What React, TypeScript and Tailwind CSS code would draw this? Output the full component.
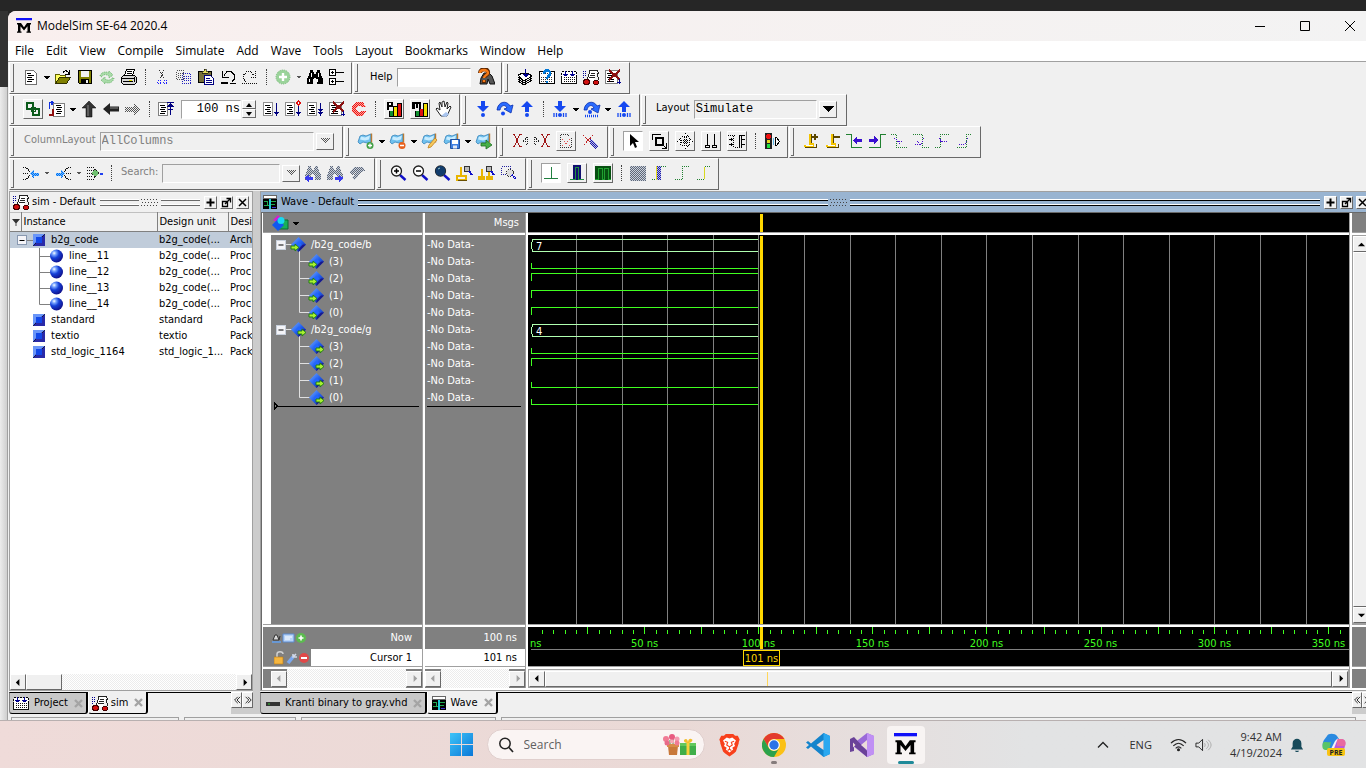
import React from "react";
import type { ReactNode } from "react";

const raised = "border border-t-white border-l-white border-r-[#696969] border-b-[#696969] bg-[#f0f0f0]";
const sunken = "border border-t-[#a0a0a0] border-l-[#a0a0a0] border-r-white border-b-white";
const tahoma = "font-['DejaVu_Sans_Condensed','Noto_Sans',sans-serif]";
const segoe = "font-['Open_Sans','Noto_Sans',sans-serif]";
const mono = "font-['Liberation_Mono',monospace]";

function Ic({ children, smooth, size = "size-[18px]" }: { children: ReactNode; smooth?: boolean; size?: string }) {
  return (
    <svg viewBox="0 0 18 18" className={`${size} block shrink-0`} fill="none" stroke="none" shapeRendering={smooth ? "auto" : "crispEdges"} aria-hidden="true">
      {children}
    </svg>
  );
}

/* ---------- toolbar glyphs, 18 x 18 ---------- */

const Lines = ({ x = 5 }: { x?: number }) => (
  <path d={`M${x} 5.5h5M${x + 1} 7.5h5M${x} 9.5h5M${x + 1} 11.5h5M${x} 13.5h5`} stroke="#000" />
);
const RunPage = () => (
  <>
    <path d="M1.500 2.500h9v13h-9z" fill="#fff" stroke="#909090" />
    <path d="M3 5.500h5M5 7.500h4M3 9.500h5M5 11.500h4M3 13.500h6" stroke="#000" />
  </>
);
const DownArrow = ({ x }: { x: number }) => (
  <>
    <path d={`M${x + 0.5} 3v11`} stroke="#000080" />
    <path d={`M${x - 2} 12h5v1h-1v1h-1v2h-1v-2h-1v-1h-1z`} fill="#000080" />
  </>
);
const Lens = () => (
  <>
    <path d="M11 11l5.500 5" stroke="#1010c8" strokeWidth="2.400" />
    <circle cx="7.500" cy="7" r="5" fill="#fff" stroke="#202020" strokeWidth="1.300" />
  </>
);
const Bookmark = ({ children }: { children?: ReactNode }) => (
  <Ic smooth>
    <path d="M1 10l2-6 3-1 3 1 5-2v8l-4 1-4-1-3 2z" fill="#6fc0ee" stroke="#3a86bd" strokeWidth=".8" />
    <path d="M4 4.500l4 1 5-2-1 4-4 1-5-1z" fill="#c8ecff" />
    <path d="M14.500 1.500v9" stroke="#b77a35" strokeWidth="1.400" />
    {children}
  </Ic>
);
const Carry = () => (
  <path d="M1 10C2 1 11 0 14 6l3-1-2 8-7-4 3-1c-2-4-6-3-7 2z" fill="#2a6cff" stroke="#0a2fb0" strokeWidth=".8" />
);
const Binoc = ({ color = "#000" }: { color?: string }) => (
  <path d="M4 2h3v2h1v2h2v-2h1v-2h3v3h1v3h1v2h1v6h-6v-5h-1v-1h-2v1h-1v5h-6v-6h1v-2h1v-3h1z" fill={color} />
);

const checks = [
  ["ckGray", "#555", "transparent"],
  ["ckBlue", "#2020a0", "#b8b8f0"],
  ["ckGreen", "#60b860", "#cdeccd"],
  ["ckRed", "#f01010", "#f8a8a0"],
  ["ckSky", "#0070f0", "#70b8ff"],
  ["ckSteel", "#606878", "#c8d0dc"],
];
const CheckerDefs = () => (
  <svg className="absolute size-0" aria-hidden="true">
    <defs>
      {checks.map(([id, ink, base]) => (
        <pattern key={id} id={id} width="2" height="2" patternUnits="userSpaceOnUse"><path d="M0 0h2v2H0z" fill={base} /><path d="M0 0h1v1H0zM1 1h1v1H1z" fill={ink} /></pattern>
      ))}
      <linearGradient id="dia" x1="0" y1="0" x2="1" y2="1"><stop offset="0" stopColor="#7eb0ff" /><stop offset=".5" stopColor="#2060f0" /><stop offset="1" stopColor="#1a1a8c" /></linearGradient>
      <radialGradient id="ball" cx=".32" cy=".28" r=".75"><stop offset="0" stopColor="#fff" /><stop offset=".2" stopColor="#7aa6ff" /><stop offset=".5" stopColor="#1540d8" /><stop offset="1" stopColor="#10108a" /></radialGradient>
    </defs>
  </svg>
);

const icons: Record<string, ReactNode> = {
  new: <Ic><path d="M3.500 2.500h8l3 3v11h-11z" fill="#fff" stroke="#707070" /><path d="M5 5.500h4M6 7.500h6M5 9.500h5M6 11.500h6M5 13.500h5" stroke="#000" /></Ic>,
  open: <Ic><path d="M1.500 15V6.500h4l1 1h5V10" fill="#ffff60" stroke="#606000" /><path d="M1.500 15.500l4-6h11l-4 6z" fill="#808000" stroke="#303000" /><path d="M9 4.500c2-3 4-2 6 1M15 2v4h-4" stroke="#000" /></Ic>,
  save: <Ic><path d="M2.500 2.500h13v13h-12l-1-1z" fill="#808000" stroke="#000" /><path d="M5 3h8v6H5z" fill="#f0f0f0" /><path d="M5 11h8v4H5z" fill="#000" /><path d="M10 12h2v3h-2z" fill="#f0f0f0" /></Ic>,
  refresh: <Ic smooth><path d="M2 8c1-4 6-5 9-3V3l4 4-4 3V8C8 6 5 6 4 9z" fill="#a9dba9" stroke="#55a955" strokeWidth=".8" strokeDasharray="1 1" /><path d="M16 10c-1 5-6 6-9 4v2l-4-4 4-3v2c3 2 6 1 7-1z" fill="#a9dba9" stroke="#55a955" strokeWidth=".8" strokeDasharray="1 1" /></Ic>,
  print: <Ic><path d="M4.500 7.500l2-6h8l-2 6" fill="#fff" stroke="#000" /><path d="M7 3.500h5M6.500 5.500h5" stroke="#000" /><path d="M1.500 9.500l2-2h11l2 2v5l-2 2h-11l-2-2z" fill="#d8d8d8" stroke="#000" /><path d="M2 10.500h12M3 13.500h10M14.500 9v5" stroke="#000" /><path d="M9 12h3v1H9z" fill="#e0e000" /></Ic>,
  cut: <Ic><path d="M6 2l5 9M11 2L7 11" stroke="#333" strokeDasharray="1 1" /><path d="M4.500 12.500h3v3h-3zM10.500 12.500h3v3h-3z" stroke="#2020ff" strokeDasharray="1 1" /></Ic>,
  copy: <Ic><path d="M1.500 2.500h7v9h-7zM3 5h5M3 7h5M3 9h5" stroke="#505050" strokeDasharray="1 1" /><path d="M7.500 5.500h8v10h-8zM9 8h5M9 10h6M9 12h6" stroke="#2020c0" strokeDasharray="1 1" /></Ic>,
  paste: <Ic><path d="M1.500 3.500h13v11h-13z" fill="#77703a" stroke="#000" /><path d="M5 5h6V3H9V1H7v2H5z" fill="#e8e060" stroke="#000" strokeWidth=".6" /><path d="M7.500 7.500h6l3 3v6h-9z" fill="#fff" stroke="#000080" /><path d="M9 10.500h4M9 12.500h6M9 14.500h6" stroke="#000080" /></Ic>,
  undo: <Ic><path d="M3.500 3v6h6M4.500 8.500L8 3.500h4l3.500 3.500v4L13 13.500" stroke="#000" /><path d="M2 15h7M11 15.500h6" stroke="#000" strokeWidth="1.500" /></Ic>,
  redo: <Ic><path d="M14.500 3v6h-6M13.500 8.500L10 3.500H6L2.500 7v4L5 13.500" stroke="#111" strokeDasharray="1 1" /><path d="M1 15.500h16" stroke="#111" strokeDasharray="1 1" /></Ic>,
  addGreen: <Ic smooth><circle cx="9" cy="9" r="7" fill="#9ad39a" stroke="#78b878" strokeDasharray="1 1" /><path d="M9 5v8M5 9h8" stroke="#fff" strokeWidth="2.400" /></Ic>,
  find: <Ic><Binoc /><path d="M5.500 5v4M12.500 5v4M3.500 11v3M11.500 11v3" stroke="#fff" /></Ic>,
  expand: <Ic><path d="M1.500 1.500h6v6h-6zM1.500 10.500h6v6h-6z" fill="#fff" stroke="#000" /><path d="M4.500 3v3M3 4.500h3M3 13.500h3M4.500 12v3M8 4.500h8M8 13.500h8" stroke="#000" /></Ic>,
  helpFind: <Ic smooth><path d="M7 5h5l3 3 3 8h-5l-2-5-1 5H3l1-6z" fill="#555" stroke="#111" /><path d="M3 5c0-5 9-5 8 0 0 2-4 2-4 5M7 12v3" stroke="#5a2500" strokeWidth="4" /><path d="M3 5c0-4 8-4 8 0 0 2-4 2-4 5M7 12v2" stroke="#f57a18" strokeWidth="2.400" /></Ic>,
  layers: <Ic><path d="M2 7l5-2h5l4 3-8 5z" fill="#fff" stroke="#000" /><path d="M2 9l6 4 8-5M2 11l6 4 8-5M2 13l6 4 8-5" stroke="#000" /><path d="M9.500 1v8M6.500 6.500h6M7.500 7.500h4M8.500 8.500h2" stroke="#000090" /></Ic>,
  compileHelp: <Ic><path d="M1.500 3.500h15v12h-15z" fill="#fff" stroke="#000" /><path d="M3 9.500h12M3 11.500h12M3 13.500h12M3 5.500h12" stroke="#333" strokeDasharray="1 1" /><path d="M6 6c0-5 7-5 6 0 0 2-3 2-3 5M9 13v2" stroke="#0078d8" strokeWidth="2.500" /></Ic>,
  compileAll: <Ic><path d="M1.500 3.500h15v12h-15z" fill="#fff" stroke="#000" strokeDasharray="2 1" /><path d="M1.500 8.500v7h15v-7M3 9.500h12M3 11.500h12M3 13.500h12" stroke="#111" /><path d="M3 9.500h12M3 11.500h12M3 13.500h12" stroke="#fff" strokeDasharray="1 1" /><path d="M5.500 3v5M12.500 3v5M3 6.500h5M4 7.500h3M10 6.500h5M11 7.500h3" stroke="#000090" /></Ic>,
  simulate: <Ic><path d="M7 3h8l-3 10-6-1z" fill="#fff" /><path d="M7 2.500h8l2 3M8 3l-3 9M15 5l2 7M9 5.500h4M8 7.500h5M7 9.500h6" stroke="#222" /><path d="M1 3.500h4M1 5.500h3M1 7.500h3M1 9.500h2" stroke="#000090" strokeDasharray="1 1" /><circle cx="4.500" cy="14" r="2.800" fill="#d01010" stroke="#400" /><circle cx="14" cy="14.500" r="2.500" fill="#d01010" stroke="#400" /></Ic>,
  stop: <Ic><path d="M1.500 2.500h12v13h-12z" fill="#fff" stroke="#808080" /><path d="M3 5.500h4M4 7.500h5M3 9.500h5M4 11.500h6M3 13.500h7" stroke="#000" /><path d="M5 2l11 10M16 2L5 12" stroke="#8b1010" strokeWidth="2.200" /><path d="M15.500 11v5M13 14.500h4" stroke="#000090" /></Ic>,
  restart: <Ic><path d="M3 3h6v6H3z" stroke="#0a5a1a" strokeWidth="2" /><path d="M9 9h6v6H9z" stroke="#0a5a1a" strokeWidth="2" /><path d="M7 7h4v4H7z" stroke="#0a5a1a" strokeWidth="1" /></Ic>,
  goto: <Ic><path d="M5.500 3.500h11v13h-11z" fill="#fff" stroke="#808080" /><Lines x={8} /><path d="M1.500 9V2.500H6M4 1v4" stroke="#1030e0" strokeWidth="1.400" /><path d="M4.500 9v6h-4" stroke="#901010" strokeWidth="2" /></Ic>,
  up: <Ic smooth><path d="M9 1l7 7h-4v9H6V8H2z" fill="#333" stroke="#000" strokeWidth=".5" /><path d="M8 5v11" stroke="#888" /></Ic>,
  left: <Ic smooth><path d="M1 9l7-6v3.500h9v5H8V15z" fill="#222" /><path d="M8 8h8" stroke="#888" /></Ic>,
  right: <Ic><path d="M17 9l-7-6v3.500H1v5h9V15z" fill="url(#ckGray)" /></Ic>,
  runTop: <Ic><path d="M1.500 2.500h9v13h-9z" fill="#fff" stroke="#808080" /><path d="M3 5.500h5M4 7.500h5M3 9.500h5M4 11.500h5M3 13.500h5" stroke="#000" /><path d="M10 2.500h7M13.500 3v12M10 6.500h7M11 5.500h5M12 4.500h3M11 9.500h5" stroke="#000080" /></Ic>,
  run: <Ic><RunPage /><DownArrow x={14} /></Ic>,
  runCont: <Ic><RunPage /><DownArrow x={14} /><path d="M14.500 1l2 2-2 2-2-2z" fill="#fff" stroke="#e01010" /></Ic>,
  runAll: <Ic><RunPage /><DownArrow x={14} /><path d="M12 9h5v1h-1v1h-3v-1h-1z" fill="#000080" /></Ic>,
  cBreak: <Ic><path d="M16 7l-3-5H6L2 6v6l4 4h7l3-5h-5l-1 1H8l-2-2V8l2-2h2l1 1z" fill="url(#ckRed)" /></Ic>,
  profP: <Ic><path d="M2 1.500h6v5H4V10H2z" fill="#000" /><path d="M4 3h2v2H4z" fill="#fff" /><path d="M5 11h3v5H5z" fill="#109030" /><path d="M9 7h3v9H9z" fill="#f0e000" /><path d="M13 4h3v12h-3z" fill="#e01010" /><path d="M4.500 10.500v6h12v-13h-4V16M8.500 16V6.500h4" stroke="#000" /></Ic>,
  profM: <Ic><path d="M1 1.500h9V9H8V4H7v4H5V4H4v5H1z" fill="#000" /><path d="M5 11h3v5H5z" fill="#109030" /><path d="M9 9h3v7H9z" fill="#e01010" /><path d="M13 4h3v12h-3z" fill="#f0e000" /><path d="M4.500 10.500v6h12v-13h-4V16M8.500 16V9" stroke="#000" /></Ic>,
  hand: <Ic smooth><path d="M6 16l-5-7 1-1 3 2-1-7 1-1 2 5V2l2-1 1 6 2-5 1 1-1 6 3-3 1 1-4 9z" fill="#fff" stroke="#222" /><path d="M6 16l5-4 3 2-3 3z" fill="#a9c5ef" /></Ic>,
  stepIn: <Ic smooth><path d="M7 1h4v5h4l-6 6-6-6h4z" fill="#1548f0" /><circle cx="9" cy="15" r="2" fill="#1548f0" /></Ic>,
  stepOver: <Ic smooth><Carry /><circle cx="7" cy="13.500" r="2" fill="#1548f0" /></Ic>,
  stepOut: <Ic smooth><path d="M7 12h4V7h4L9 1 3 7h4z" fill="#1548f0" /><circle cx="9" cy="15" r="2" fill="#1548f0" /></Ic>,
  stepInCur: <Ic smooth><path d="M7 1h4v5h4l-6 6-6-6h4z" fill="#1548f0" /><path d="M3 13v4M5.500 13v4M12.500 13v4M15 13v4" stroke="#1548f0" strokeWidth="1.300" /><circle cx="9" cy="15" r="2" fill="#1548f0" /></Ic>,
  stepOverCur: <Ic smooth><Carry /><circle cx="7" cy="12" r="2" fill="#1548f0" /><path d="M2 16h14" stroke="#1548f0" strokeWidth="2.500" strokeDasharray="1 1" /></Ic>,
  stepOutCur: <Ic smooth><path d="M7 12h4V7h4L9 1 3 7h4z" fill="#1548f0" /><path d="M3 13v4M5.500 13v4M12.500 13v4M15 13v4" stroke="#1548f0" strokeWidth="1.300" /><circle cx="9" cy="15" r="2" fill="#1548f0" /></Ic>,
  bmAdd: <Bookmark><circle cx="13" cy="13.500" r="3.500" fill="#43a047" /><path d="M11 13.500h4M13 11.500v4" stroke="#fff" strokeWidth="1.300" /></Bookmark>,
  bmDel: <Bookmark><circle cx="13" cy="13.500" r="3.500" fill="#e8601c" /><path d="M11 13.500h4" stroke="#fff" strokeWidth="1.500" /></Bookmark>,
  bmEdit: <Bookmark><path d="M7 16l1-3 6-7 2 2-6 7z" fill="#f6c85a" stroke="#c08020" strokeWidth=".8" /></Bookmark>,
  bmSave: <Bookmark><path d="M7.500 7.500h9v9h-9z" fill="#3f7fe0" stroke="#2050a0" /><path d="M9 8h6v4H9z" fill="#fff" /><path d="M10 13.500h4v3h-4z" fill="#dfe8f8" /></Bookmark>,
  bmGo: <Bookmark><path d="M6 11h5V8l6 5-6 4v-3H6z" fill="#48b048" stroke="#207020" strokeWidth=".8" /></Bookmark>,
  xPrev: <Ic><path d="M1.500 2.500h2l5 12h2M10.500 2.500h-2l-5 12h-2" stroke="#a01818" /><path d="M16.500 5v8M14.500 7v4M12.500 9v1M16 5l-4 4 4 4" stroke="#222" strokeDasharray="1 1" /></Ic>,
  xNext: <Ic><path d="M7.500 2.500h2l5 12h2M16.500 2.500h-2l-5 12h-2" stroke="#a01818" /><path d="M1.500 5v8M3.500 7v4M2 5l4 4-4 4" stroke="#222" strokeDasharray="1 1" /></Ic>,
  dotPage: <Ic><path d="M3.500 2.500h7l4 4v9h-11z" stroke="#333" strokeDasharray="1 1" /><path d="M5 7l8 7M13 7l-8 7" stroke="#e05050" strokeDasharray="1 2" /></Ic>,
  xEdit: <Ic><path d="M2 3l10 10M12 3L3 13" stroke="#c02020" strokeDasharray="2 1" /><path d="M9 7l4 2 4 5-3 3-5-5z" fill="url(#ckBlue)" /></Ic>,
  pointer: <Ic smooth><path d="M6 2v12l3-3 2 5 2-1-2-5h4z" fill="#000" /></Ic>,
  zoomMode: <Ic><path d="M2.500 8V2.500H11" stroke="#000" /><path d="M6 6h7v7H6z" stroke="#000" strokeWidth="2" /><path d="M12 12l4 4M16.500 11v5.500h-5" stroke="#000" /></Ic>,
  pan: <Ic><path d="M9.500 1.500l3 3h-6zM9.500 16.500l3-3h-6zM1.500 9.500l3-3v6zM16.500 9.500l-3-3v6z" fill="#fff" stroke="#000" strokeDasharray="1 1" /><path d="M8.500 5v9M10.500 5v9M5 8.500h9M5 10.500h9" stroke="#000" strokeDasharray="1 1" /></Ic>,
  twoCur: <Ic><path d="M5.500 2v11M12.500 2v11M3.500 13.500h4v2h-4zM10.500 13.500h4v2h-4z" stroke="#000" /></Ic>,
  editWave: <Ic><path d="M0 3.500h7M5.500 4v12M7 15.500h4" stroke="#000" strokeDasharray="1 1" /><path d="M11.500 3v13M12 3.500h5M13.500 4v12M1 7.500h4M3 6v3M1 12.500h4M3 11v3M14 7.500h3M14 12.500h3" stroke="#000" /></Ic>,
  light: <Ic><path d="M2 1h7v16H2z" fill="#222" /><circle cx="5.500" cy="4.500" r="2.500" fill="#f01010" /><circle cx="5.500" cy="9.500" r="1.700" fill="#e8d820" /><circle cx="5.500" cy="14" r="2" fill="#20e040" /><path d="M12.500 5.500h1l3 4-3 4h-1z" fill="#fff" stroke="#000" /><path d="M10.500 6v7" stroke="#60b8e8" /></Ic>,
  curAdd: <Ic><path d="M7 2h2v9h3v4H2v-2h5z" fill="#f4c400" /><path d="M9.500 2v9M3 15.500h11v-4" stroke="#5a4600" /><path d="M4 13.500h7" stroke="#fff" /><path d="M10 5h6M13 2v6" stroke="#5a4600" strokeWidth="2" /></Ic>,
  curDel: <Ic><path d="M7 2h2v9h3v4H2v-2h5z" fill="#f4c400" /><path d="M9.500 2v9M3 15.500h11v-4" stroke="#5a4600" /><path d="M4 13.500h7" stroke="#fff" /><path d="M10 5h6" stroke="#5a4600" strokeWidth="2" /></Ic>,
  edgePrev: <Ic><path d="M0 2.500h5.500v13H16" stroke="#208030" strokeWidth="1.300" /><path d="M7 8l4-4v3h5v3h-5v3z" fill="#3a10d0" /></Ic>,
  edgeNext: <Ic><path d="M1 15.500h11.500V2.500H18" stroke="#208030" strokeWidth="1.300" /><path d="M10 8L6 4v3H1v3h5v3z" fill="#3a10d0" /></Ic>,
  fallPrev: <Ic><path d="M1 2.500h5.500v13H17" stroke="#208030" strokeDasharray="1 1" /><path d="M4 6l4 2 2 4M7 9h6" stroke="#4a10d0" strokeDasharray="1 1" /></Ic>,
  fallNext: <Ic><path d="M1 2.500h9.500v13H17" stroke="#208030" strokeDasharray="1 1" /><path d="M3 12h6l3-6M5 9l4 4" stroke="#4a10d0" strokeDasharray="1 1" /></Ic>,
  risePrev: <Ic><path d="M1 15.500h5.500v-13H16" stroke="#208030" strokeDasharray="1 1" /><path d="M5 6l5 6M6 9h7" stroke="#4a10d0" strokeDasharray="1 1" /></Ic>,
  riseNext: <Ic><path d="M1 15.500h9.500v-13H16" stroke="#208030" strokeDasharray="1 1" /><path d="M3 12h6l3-6" stroke="#4a10d0" strokeDasharray="1 1" /></Ic>,
  arrL: <Ic><path d="M1 3.500h3l4 4M1 9.500h5M1 15.500h3l4-4" stroke="#111" strokeDasharray="1 1" /><path d="M8 9.500l4-4v3h5v3h-5v3z" fill="url(#ckSky)" /></Ic>,
  arrR: <Ic><path d="M17 3.500h-3l-4 4M17 9.500h-5M17 15.500h-3l-4-4" stroke="#111" strokeDasharray="1 1" /><path d="M11 9.500l-4-4v3H2v3h5v3z" fill="url(#ckSky)" /></Ic>,
  arrG: <Ic><path d="M1 3.500h6l2 3M1 6.500h5M1 9.500h5M1 12.500h5M1 15.500h6l2-3" stroke="#111" strokeDasharray="1 1" /><path d="M9 5l4 4-4 4-4-4z" fill="#70c070" stroke="#222" strokeDasharray="1 1" /><path d="M14 9.500h3" stroke="#2040f0" strokeWidth="2" /></Ic>,
  sPrev: <Ic><Binoc color="url(#ckSteel)" /><path d="M0 14l5-3v2h4v3H5v2z" fill="#3a3af0" /></Ic>,
  sNext: <Ic><Binoc color="url(#ckSteel)" /><path d="M18 14l-5-3v2H9v3h4v2z" fill="#3a3af0" /></Ic>,
  sOpt: <Ic><path d="M2 8l4-5h9l2 4-4 1-6 8-3-2 4-6-4 3z" fill="url(#ckSteel)" /></Ic>,
  zin: <Ic smooth><Lens /><path d="M5 7h5M7.500 4.500v5" stroke="#000" strokeWidth="1.500" /></Ic>,
  zout: <Ic smooth><Lens /><path d="M5 7h5" stroke="#000" strokeWidth="1.500" /></Ic>,
  zfull: <Ic smooth><Lens /><circle cx="7.500" cy="7" r="5" fill="#123c6c" /><path d="M5 5l2-1" stroke="#9cc" /></Ic>,
  zcur: <Ic><path d="M6 3v9M2 12h9v4H2z" stroke="#e8b400" strokeWidth="2" /><path d="M3 16.500h9" stroke="#6a5000" /><circle cx="12" cy="5" r="3" fill="#bbb" stroke="#333" /><path d="M14 7l3 4" stroke="#1010c8" strokeWidth="2" /></Ic>,
  zcur2: <Ic><path d="M5 5v8M2 13h5v2H2zM12 8v5M10 13h5v2h-5z" stroke="#e8b400" strokeWidth="2" /><circle cx="12" cy="5" r="3" fill="#bbb" stroke="#333" /><path d="M14 7l3 4" stroke="#1010c8" strokeWidth="2" /></Ic>,
  zsel: <Ic><path d="M2.500 2.500h9v8h-9z" stroke="#2020a0" strokeDasharray="1 1" /><circle cx="11" cy="9" r="3.500" fill="#ddd" stroke="#333" strokeDasharray="1 1" /><path d="M13 11l4 4" stroke="#1010c8" strokeWidth="2" strokeDasharray="1 1" /></Ic>,
  w1: <Ic><path d="M2 14.500h14M9.500 3v11" stroke="#208040" /></Ic>,
  w2: <Ic><path d="M5 1h8v15H5z" fill="#101070" /><path d="M2 15.500h5.500v-12h3v12H16" stroke="#209040" /></Ic>,
  w3: <Ic><path d="M1 2h16v14H1z" fill="#065010" /><path d="M1 15.500h3v-11h4v11h2v-11h4v11h3" stroke="#20a030" /></Ic>,
  w4: <Ic><path d="M1 2h16v15H1z" fill="url(#ckSteel)" /></Ic>,
  w5: <Ic><path d="M6 2h4v14H6z" fill="url(#ckBlue)" /><path d="M1 15.500h4M10 2.500h5" stroke="#208030" strokeDasharray="1 1" /><path d="M5.500 2v14" stroke="#e8e020" /></Ic>,
  w6: <Ic><path d="M2 15.500h7.500v-13H16" stroke="#208030" strokeDasharray="1 1" /></Ic>,
  w7: <Ic><path d="M2 15.500h7.500M10 2.500h6" stroke="#208030" strokeDasharray="1 1" /><path d="M9.500 3v12" stroke="#d8d820" /></Ic>,
};

function Drop({ faint }: { faint?: boolean }) {
  return (
    <svg viewBox="0 0 10 6" className="h-[6px] w-[10px] shrink-0" shapeRendering="crispEdges" aria-hidden="true">
      <path d={faint ? "M3 2h4v1H6v1H4V3H3z" : "M2 2h6v1H7v1H6v1H4V4H3V3H2z"} fill={faint ? "#555" : "#000"} />
    </svg>
  );
}

/* Tokens: icon name, "|" separator, "v" drop arrow, "v-" faint arrow, "[name" raised button, "(name" pressed button */
function Tools({ items }: { items: string[] }) {
  return (
    <>
      {items.map((t, i) => {
        if (t === "|") return <span key={i} className="mx-[5px] h-4 w-px shrink-0 border-l border-dotted border-[#404040]" />;
        if (t === "v") return <Drop key={i} />;
        if (t === "v-") return <Drop key={i} faint />;
        const boxed = t[0] === "[" || t[0] === "(";
        const name = boxed ? t.slice(1) : t;
        const look = t[0] === "[" ? raised : t[0] === "(" ? sunken + " bg-white" : "";
        return (
          <button key={i} type="button" aria-label={name} className={boxed ? `mx-[3px] flex size-5 shrink-0 items-center justify-center overflow-hidden ${look}` : "flex h-5 w-[22px] shrink-0 items-center justify-center"}>
            {icons[name]}
          </button>
        );
      })}
    </>
  );
}

function Group({ children, w }: { children: ReactNode; w: string }) {
  return (
    <div className={`mr-px flex h-8 shrink-0 items-center overflow-hidden border border-t-white border-l-white border-r-[#696969] border-b-[#696969] ${w}`}>
      <span className="ml-px h-7 w-[3px] shrink-0 border-r border-b border-r-[#696969] border-b-[#696969]" />
      <div className="flex items-center pb-0.5 pl-1.5">{children}</div>
    </div>
  );
}

function Combo({ id, label, value, w, dim }: { id: string; label: string; value: string; w: string; dim?: boolean }) {
  return (
    <div className={`flex items-center ${dim ? "text-[#808080]" : "text-black"}`}>
      <label htmlFor={id} className="mr-1 shrink-0 pb-0.5 pl-1">{label}</label>
      <select id={id} defaultValue={value} className={`h-[19px] appearance-none rounded-none bg-[#f0f0f0] px-px text-[12px] leading-4 ${sunken} ${mono} ${w}`}>
        <option>{value}</option>
      </select>
      <span className={`ml-0.5 flex h-[17px] w-[18px] items-center justify-center ${raised}`}>
        <svg viewBox="0 0 12 7" className="h-[7px] w-3" shapeRendering="crispEdges" aria-hidden="true"><path d="M0 0h12L6 6z" fill={dim ? "url(#ckGray)" : "#000"} /></svg>
      </span>
    </div>
  );
}

function Toolbars() {
  const row = "flex";
  return (
    <div className={`border-t border-[#a0a0a0] pl-px text-[11px] ${tahoma}`}>
      <div className={row}>
        <Group w="w-[343px]"><Tools items={["new", "v", "open", "save", "refresh", "print", "|", "cut", "copy", "paste", "undo", "redo", "|", "addGreen", "v-", "find", "expand"]} /></Group>
        <Group w="w-[149px]">
          <label htmlFor="help" className="pl-1.5">Help</label>
          <input id="help" className={`mx-1 h-[19px] w-[74px] bg-white ${sunken}`} />
          <Tools items={["helpFind"]} />
        </Group>
        <Group w="w-[127px]"><Tools items={["layers", "compileHelp", "compileAll", "simulate", "stop"]} /></Group>
      </div>
      <div className={row}>
        <Group w="w-[451px]">
          <Tools items={["[restart", "goto", "v", "up", "left", "right", "|", "runTop"]} />
          <input aria-label="Run length" defaultValue="100 ns" className={`ml-1 h-[19px] w-[60px] bg-white text-right text-[12px] ${sunken} ${mono}`} />
          <span className="mr-1 ml-px flex w-[14px] flex-col">
            <button type="button" aria-label="Increase" className={`flex h-[9px] items-center justify-center ${raised}`}><svg viewBox="0 0 6 4" className="h-1 w-1.5"><path d="M3 0l3 4H0z" /></svg></button>
            <button type="button" aria-label="Decrease" className={`flex h-[9px] items-center justify-center ${raised}`}><svg viewBox="0 0 6 4" className="h-1 w-1.5"><path d="M3 4l3-4H0z" /></svg></button>
          </span>
          <Tools items={["run", "runCont", "runAll", "stop", "cBreak", "|", "[profP", "[profM", "hand"]} />
        </Group>
        <Group w="w-[179px]"><Tools items={["stepIn", "stepOver", "stepOut", "|", "stepInCur", "v", "stepOverCur", "v", "stepOutCur"]} /></Group>
        <Group w="w-[206px]"><Combo id="layout" label="Layout" value="Simulate" w="w-[123px]" /></Group>
      </div>
      <div className={row}>
        <Group w="w-[334px]"><Combo id="columns" label="ColumnLayout" value="AllColumns" w="w-[214px]" dim /></Group>
        <Group w="w-[153px]"><Tools items={["bmAdd", "v", "bmDel", "v", "bmEdit", "bmSave", "v", "bmGo"]} /></Group>
        <Group w="w-[110px]"><Tools items={["xPrev", "xNext", "[dotPage", "xEdit"]} /></Group>
        <Group w="w-[179px]"><Tools items={["(pointer", "[zoomMode", "[pan", "[twoCur", "[editWave", "|", "light"]} /></Group>
        <Group w="w-[192px]"><Tools items={["curAdd", "curDel", "edgePrev", "edgeNext", "fallPrev", "fallNext", "risePrev", "riseNext"]} /></Group>
      </div>
      <div className={row}>
        <Group w="w-[366px]">
          <Tools items={["arrL", "v-", "arrR", "v-", "arrG", "|"]} />
          <Combo id="search" label="Search:" value="" w="w-[118px]" dim />
          <span className="w-0.5" />
          <Tools items={["sPrev", "sNext", "sOpt"]} />
        </Group>
        <Group w="w-[150px]"><Tools items={["zin", "zout", "zfull", "zcur", "zcur2", "zsel"]} /></Group>
        <Group w="w-[192px]"><Tools items={["(w1", "[w2", "[w3", "|", "w4", "w5", "w6", "w7"]} /></Group>
      </div>
    </div>
  );
}

/* ---------- shared pane parts ---------- */

function Rules({ active }: { active?: boolean }) {
  const line = `h-0.5 border-t border-b border-t-white ${active ? "border-b-black" : "border-b-[#696969]"}`;
  return (
    <span className="flex h-[7px] flex-1 flex-col justify-between">
      <i className={line} />
      <i className={line} />
    </span>
  );
}

function PaneTitle({ icon, title, active }: { icon: ReactNode; title: string; active?: boolean }) {
  const b = `flex size-[13px] shrink-0 items-center justify-center ${raised}`;
  const g = "size-[11px]";
  return (
    <div className={`flex h-5 shrink-0 items-center pl-0.5 ${active ? "bg-[#99b4d1]" : "bg-[#f0f0f0]"}`}>
      {icon}
      <h2 className="mr-1 ml-1 shrink-0">{title}</h2>
      <Rules active={active} />
      <svg viewBox="0 0 18 7" className="mx-0.5 h-[7px] w-[18px] shrink-0" shapeRendering="crispEdges" aria-hidden="true"><path d="M0 .5h18M1 3.500h17M0 6.500h18" stroke="#444" strokeDasharray="1 2" /></svg>
      <Rules active={active} />
      <span className={`flex shrink-0 gap-[3px] pl-1 ${active ? "-mr-[3px]" : "pr-[3px]"}`}>
        <button type="button" aria-label="Zoom pane" className={b}><svg viewBox="0 0 11 11" className={g}><path d="M5.500 1.500v8M1.500 5.500h8" stroke="#000" strokeWidth="2" /></svg></button>
        <button type="button" aria-label="Undock" className={b}><svg viewBox="0 0 11 11" className={g} fill="none"><path d="M1.500 4.500h5v5h-5zM4 7l5-5M5.500 1.500h4v4" stroke="#000" strokeWidth="1.300" /></svg></button>
        <button type="button" aria-label="Close pane" className={b}><svg viewBox="0 0 11 11" className={g}><path d="M2 2l7 7M9 2l-7 7" stroke="#000" strokeWidth="1.500" /></svg></button>
      </span>
    </div>
  );
}

const trough = "bg-[conic-gradient(#fff_25%,#ececec_0_50%,#fff_0_75%,#ececec_0)] bg-[length:2px_2px]";

function Arrow({ dir, dim }: { dir: "l" | "r" | "u" | "d"; dim?: boolean }) {
  const d = { l: "M6 1v8L2 5z", r: "M4 1v8l4-4z", u: "M1 7h8L5 3z", d: "M1 3h8L5 7z" }[dir];
  return (
    <button type="button" aria-label={"Scroll " + dir} className={`flex size-4 shrink-0 items-center justify-center ${raised}`}>
      <svg viewBox="0 0 10 10" className="size-[9px]"><path d={d} fill={dim ? "#a0a0a0" : "#000"} /></svg>
    </button>
  );
}

function Tab({ icon, label, active }: { icon: ReactNode; label: string; active?: boolean }) {
  return (
    <button type="button" className={`flex h-[22px] shrink-0 items-center rounded-b-[3px] border-r-2 border-b border-l border-black px-0.5 ${active ? "border-l-white bg-[#f0f0f0]" : "border-t border-l-[#808080] bg-[#c8c8c8]"}`}>
      {icon}
      <span className="mr-1.5 ml-1">{label}</span>
      <svg viewBox="0 0 9 9" className="mr-px size-[9px]"><path d="M1 1l7 7M8 1L1 8" stroke="#a4a4a4" strokeWidth="2.400" /></svg>
    </button>
  );
}

function TabNav() {
  const b = `flex h-4 w-[11px] items-center justify-center ${raised}`;
  return (
    <div className="flex h-[22px] shrink-0 items-start bg-[#ccc]">
      {["M6 1L2 5l4 4M9 1L5 5l4 4", "M2 1l4 4-4 4M5 1l4 4-4 4"].map((d, i) => (
        <button key={i} type="button" aria-label={i ? "Next tabs" : "Previous tabs"} className={b}><svg viewBox="0 0 10 10" className="size-2" fill="none"><path d={d} stroke="#000" /></svg></button>
      ))}
    </div>
  );
}

const WaveIcon = () => (
  <svg viewBox="0 0 14 14" className="size-[14px] shrink-0" shapeRendering="crispEdges" aria-hidden="true"><path d="M0 0h14v14H0z" fill="#000" /><path d="M.5 .5h13v3H.5z" fill="#fff" stroke="#666" /><path d="M1 6.500h3v4M1 10.500h5M8 6.500h5M8 9.500h4" stroke="#20a850" fill="none" /><path d="M7 4v10" stroke="#20c8d8" strokeWidth="2" /><path d="M9 12.500h4" stroke="#4030d0" /></svg>
);

/* ---------- structure pane ---------- */

const tree = [
  { n: "b2g_code", u: "b2g_code(...", t: "Arch", k: "root" },
  { n: "line__11", u: "b2g_code(...", t: "Proc", k: "leaf" },
  { n: "line__12", u: "b2g_code(...", t: "Proc", k: "leaf" },
  { n: "line__13", u: "b2g_code(...", t: "Proc", k: "leaf" },
  { n: "line__14", u: "b2g_code(...", t: "Proc", k: "last" },
  { n: "standard", u: "standard", t: "Pack", k: "pkg" },
  { n: "textio", u: "textio", t: "Pack", k: "pkg" },
  { n: "std_logic_1164", u: "std_logic_1...", t: "Pack", k: "pkg" },
];

function TreeGlyph({ k }: { k: string }) {
  const leaf = k === "leaf" || k === "last";
  return (
    <svg viewBox={leaf ? "0 0 54 16" : "0 0 36 16"} className={`h-4 shrink-0 ${leaf ? "w-[54px]" : "w-9"}`} aria-hidden="true">
      {leaf ? (
        <>
          <path d={k === "last" ? "M28.500 0v8.500H39" : "M28.500 0v16M28.500 8.500H39"} stroke="#808080" fill="none" />
          <circle cx="45.500" cy="8" r="6.500" fill="url(#ball)" />
        </>
      ) : (
        <>
          {k === "root" && <><path d="M16 8.500h6" stroke="#808080" /><rect x="6.500" y="3.500" width="9" height="9" fill="#f4f4f8" stroke="#8898b0" /><path d="M8.500 8.500h5" stroke="#000" /></>}
          <path d="M22 2h12v12H22z" fill="#2a2aa8" /><path d="M22 14V2h12l-4 3h-5v5z" fill="#6a96f8" /><path d="M25 5h6v6h-6z" fill="#1248e8" /><path d="M31 5l3-3M22 14l3-3" stroke="#000" strokeWidth=".6" />
        </>
      )}
    </svg>
  );
}

function SimPane() {
  const head = "border-r border-b border-[#808080] p-0 pl-0.5 text-left font-normal whitespace-nowrap overflow-hidden";
  return (
    <section className="flex w-[244px] shrink-0 flex-col">
      <div className="flex min-h-0 flex-1 flex-col border border-[#a0a0a0] bg-white">
        <PaneTitle icon={<span className="flex size-4 items-center">{icons.simulate}</span>} title="sim - Default" />
        <table className="w-full table-fixed border-collapse">
          <colgroup><col className="w-[11px]" /><col className="w-[136px]" /><col className="w-[71px]" /><col /></colgroup>
          <thead>
            <tr className="h-[19px] border-t border-[#c0c0c0] bg-[#f0f0f0]">
              <th className={head} aria-label="Filter"><svg viewBox="0 0 9 9" className="size-2"><path d="M0 1h9L5 6v3H4V6z" fill="#333" /></svg></th>
              <th className={head}>Instance</th>
              <th className={head}>Design unit</th>
              <th className={head + " border-r-0"}>Desi</th>
            </tr>
          </thead>
          <tbody>
            {tree.map((r) => (
              <tr key={r.n} className={`h-4 whitespace-nowrap ${r.k === "root" ? "bg-[#c0ccda]" : ""}`}>
                <td colSpan={2} className="p-0 pl-px"><div className="flex h-4 items-center gap-1"><TreeGlyph k={r.k} /><span className="leading-4">{r.n}</span></div></td>
                <td className="overflow-hidden p-0 pl-0.5 leading-4">{r.u}</td>
                <td className="overflow-hidden p-0 pl-0.5 leading-4">{r.t}</td>
              </tr>
            ))}
          </tbody>
        </table>
        <div className={`mt-auto flex h-4 shrink-0 ${trough}`}>
          <Arrow dir="l" />
          <span className={`w-9 ${raised}`} />
          <span className="flex-1" />
          <Arrow dir="r" />
        </div>
      </div>
      <div className="mt-px flex h-[22px] shrink-0">
        <Tab icon={<span className="flex size-[18px] items-center">{icons.compileAll}</span>} label="Project" />
        <Tab icon={<span className="flex size-4 items-center">{icons.simulate}</span>} label="sim" active />
        <span className="flex-1 border-t border-black" />
        <TabNav />
      </div>
    </section>
  );
}

/* ---------- wave pane ---------- */

type Sig = { n: string; parent?: boolean; last?: boolean; out?: boolean; hi?: boolean; v?: string };
const signals: Sig[] = [
  { n: "/b2g_code/b", parent: true, v: "7" },
  { n: "(3)" }, { n: "(2)", hi: true }, { n: "(1)", hi: true }, { n: "(0)", hi: true, last: true },
  { n: "/b2g_code/g", parent: true, out: true, v: "4" },
  { n: "(3)", out: true }, { n: "(2)", out: true, hi: true }, { n: "(1)", out: true }, { n: "(0)", out: true, last: true },
];

function SigGlyph({ s }: { s: Sig }) {
  const x = s.parent ? 20 : 38;
  return (
    <svg viewBox={s.parent ? "0 0 36 17" : "0 0 54 17"} className={`h-[17px] shrink-0 ${s.parent ? "w-9" : "w-[54px]"}`} aria-hidden="true">
      {s.parent ? (
        <><path d="M15 8.500h7M28.500 13v4" stroke="#e0e0e0" /><rect x="5.500" y="4.500" width="9" height="9" fill="#f4f4f8" stroke="#c8d0dc" /><path d="M7.500 9h5" stroke="#000" /></>
      ) : (
        <path d={s.last ? "M28.500 0v8.500H40" : "M28.500 0v17M28.500 8.500H40"} stroke="#e0e0e0" fill="none" />
      )}
      <path d={`M${x} 8.500l7.500-7.500 7.500 7.500-7.500 7.500z`} fill="url(#dia)" />
      <path d={`M${x + 7.5} 16l7.500-7.500-3 0-4.500 4.500z`} fill="#18188c" />
      <path d={`M${x + 4.5} 8.500l3-3 3 3-3 3z`} fill="#2266ff" />
      <path d={`M${x + (s.out ? 7 : 0)} 10h4V8l4 3.500-4 3.500v-2h-4z`} fill="#a8f030" stroke="#1c7a10" strokeWidth=".9" />
    </svg>
  );
}

const PX = 2.28;
const ORIGIN = 2.5;

function WaveCanvas() {
  const grid = Array.from({ length: 40 }, (_, i) => Math.round(ORIGIN + (i + 1) * 20 * PX) + 0.5);
  return (
    <svg className="block h-full w-full bg-black" shapeRendering="crispEdges" role="img" aria-label="Waveforms">
      {grid.map((x) => <path key={x} d={`M${x} 0V4000`} stroke="#808080" />)}
      {signals.map((s, i) => {
        const c = 10 + i * 17;
        if (s.v)
          return (
            <g key={i}>
              <path d={`M230 ${c - 5.5}H4.500v2M3.500 ${c - 3}v7M4.500 ${c + 4}v2.500H230`} stroke="#b0ffb0" fill="none" />
              <text x="8" y={c + 5} fill="#fff" fontSize="11" className={tahoma}>{s.v}</text>
            </g>
          );
        const y = s.hi ? c - 5.5 : c + 6.5;
        return <path key={i} d={`M3.500 ${s.hi ? y + 7 : y - 6}V${y}H230`} stroke="#40ff20" fill="none" />;
      })}
      <path d="M233.500 1V4000" stroke="#ffd700" strokeWidth="3" />
    </svg>
  );
}

function TimeAxis() {
  const ticks = Array.from({ length: 100 }, (_, i) => (i + 1) * 5);
  const labels = [50, 100, 150, 200, 250, 300, 350];
  return (
    <svg className="block h-[39px] w-full bg-black" shapeRendering="crispEdges" role="img" aria-label="Time axis">
      {ticks.map((t) => <path key={t} d={`M${Math.round(ORIGIN + t * PX) + 0.5} ${t % 25 ? 3 : 0}V7`} stroke="#40ff20" />)}
      <text x="2" y="20" fill="#40ff20" fontSize="11" className={tahoma}>ns</text>
      {labels.map((t) => <text key={t} x={ORIGIN + t * PX} y="20" textAnchor="middle" fill="#40ff20" fontSize="11" className={tahoma}>{t} ns</text>)}
      <path d="M3 22.500H4000" stroke="#808080" />
      <path d="M233.500 0V22" stroke="#ffd700" strokeWidth="3" />
      <rect x="215.500" y="23.500" width="36" height="15" fill="#000" stroke="#ffd700" />
      <text x="233.500" y="35" textAnchor="middle" fill="#ffd700" fontSize="11" className={tahoma}>101 ns</text>
    </svg>
  );
}

function Column({ w, head, body, foot, bar }: { w: string; head: ReactNode; body: ReactNode; foot: ReactNode; bar: ReactNode }) {
  const line = "h-[3px] shrink-0 border-t border-[#a0a0a0] bg-white";
  return (
    <div className={`flex flex-col ${w}`}>
      <div className="h-[19px] shrink-0 overflow-hidden bg-[#808080]">{head}</div>
      <div className={line} />
      <div className="min-h-0 flex-1 overflow-hidden bg-[#808080]">{body}</div>
      <div className={line} />
      <div className="h-[39px] shrink-0 overflow-hidden bg-[#808080]">{foot}</div>
      <div className={line} />
      <div className="flex h-[19px] shrink-0 items-center overflow-hidden bg-[#808080]">{bar}</div>
    </div>
  );
}

function WavePane() {
  return (
    <section className="flex min-w-0 flex-1 flex-col overflow-hidden">
      <div className="flex min-h-0 flex-1 flex-col border border-r-0 border-[#a0a0a0] bg-white">
        <PaneTitle icon={<WaveIcon />} title="Wave - Default" active />
        <div className="flex min-h-0 flex-1 gap-0.5 border-t border-l border-[#696969] pb-0.5 pl-px">
          <Column
            w="w-[160px] shrink-0 border-r border-[#a0a0a0]"
            head={
              <div className="flex h-full items-center gap-0.5 pl-2">
                <Ic smooth><path d="M2 6l5-5 5 5-4 3z" fill="#d020d0" /><path d="M9 6h8v9H8z" fill="#18b058" stroke="#0a6a30" /><path d="M1 11l6-6 6 6-6 6z" fill="#1058f0" /><circle cx="10" cy="6.500" r="3.500" fill="#18d8f0" /></Ic>
                <Drop />
              </div>
            }
            body={
              <div className="flex h-full text-white">
                <span className="w-2 shrink-0 bg-white" />
                <div className="min-w-0 flex-1 pt-px">
                  {signals.map((s, i) => (
                    <div key={i} className="flex h-[17px] items-center gap-1"><SigGlyph s={s} /><span>{s.n}</span></div>
                  ))}
                  <svg className="-mt-1 h-2 w-full" viewBox="0 0 150 8" preserveAspectRatio="none" shapeRendering="crispEdges"><path d="M3.500 1v6l3-3zM7 4.500h140" stroke="#000" fill="none" /></svg>
                </div>
              </div>
            }
            foot={
              <div className="flex h-full flex-col">
                <div className="flex h-[22px] items-center pr-2.5 pl-2 text-white">
                  <svg viewBox="0 0 36 12" className="h-3 w-9" aria-hidden="true"><path d="M2 8l2-5h2l2 5zM8 8l1-4" fill="#d8d8d8" stroke="#333" /><path d="M1 10h9" stroke="#60a0f0" strokeWidth="1.500" /><path d="M12 2h11v8H12z" fill="#b8d4f8" stroke="#5a8ad0" /><path d="M14 5h7M14 7h5" stroke="#fff" /><circle cx="30" cy="6" r="5" fill="#5cbb50" /><path d="M27.500 6h5M30 3.500v5" stroke="#fff" strokeWidth="1.600" /></svg>
                  <span className="ml-auto">Now</span>
                </div>
                <div className="flex flex-1 items-center">
                  <svg viewBox="0 0 36 14" className="mr-px ml-[11px] h-[14px] w-9 shrink-0" aria-hidden="true"><path d="M3 6V3c0-3 6-3 6 0" stroke="#d0d0d0" strokeWidth="1.500" fill="none" /><path d="M0 6h9v7H0z" fill="#f5b640" stroke="#b87810" strokeWidth=".6" /><path d="M14 12l5-6" stroke="#7aa8f0" strokeWidth="3.500" /><path d="M19 6l3-3m-3 0v3h4" stroke="#d0d8e8" strokeWidth="1.600" fill="none" /><circle cx="30" cy="7" r="5" fill="#e04848" /><path d="M27 7h6" stroke="#fff" strokeWidth="2" /></svg>
                  <span className="flex h-full flex-1 items-center justify-end bg-white pr-2.5">Cursor 1</span>
                </div>
              </div>
            }
            bar={<><span className="w-2 shrink-0" /><Arrow dir="l" dim /><span className={`h-full flex-1 ${trough}`} /><Arrow dir="r" dim /></>}
          />
          <Column
            w="w-[101px] shrink-0 border-r border-[#a0a0a0]"
            head={<div className="pr-1.5 text-right leading-5 text-white">Msgs</div>}
            body={
              <div className="pt-px pr-1 pl-0.5 text-white">
                {signals.map((_, i) => <div key={i} className="h-[17px] leading-[17px]">-No Data-</div>)}
                <div className="border-t border-black" />
              </div>
            }
            foot={<div className="flex h-full flex-col text-right"><div className="h-[22px] pr-2 leading-[22px] text-white">100 ns</div><div className="flex-1 bg-white pr-2 leading-[17px]">101 ns</div></div>}
            bar={<><Arrow dir="l" dim /><span className={`h-full flex-1 ${trough}`} /><Arrow dir="r" dim /></>}
          />
          <Column
            w="min-w-0 flex-1 border-r border-[#a0a0a0]"
            head={<svg className="block h-full w-full bg-black" shapeRendering="crispEdges"><path d="M233.500 1v20" stroke="#ffd700" strokeWidth="3" /></svg>}
            body={<WaveCanvas />}
            foot={<TimeAxis />}
            bar={
              <div className="flex h-full w-full items-center border border-[#a0a0a0] bg-[#f0f0f0]">
                <Arrow dir="l" />
                <span className={`flex h-4 flex-1 ${raised}`}><span className="ml-[221px] w-px bg-[#ffd75a]" /></span>
                <Arrow dir="r" />
              </div>
            }
          />
          <Column
            w="w-[14px] shrink-0"
            head={null}
            body={<div className="flex h-full w-[18px] flex-col border border-[#a0a0a0] bg-[#f0f0f0]"><Arrow dir="u" /><span className={`flex-1 ${raised}`} /><Arrow dir="d" /></div>}
            foot={null}
            bar={null}
          />
        </div>
      </div>
      <div className="mt-px flex h-[22px] shrink-0">
        <Tab icon={<svg viewBox="0 0 16 8" className="ml-0.5 h-2 w-4"><path d="M2 1h12l1 3H1z" fill="#ccc" /><path d="M1 3h14v4H1z" fill="#333" /><path d="M3 5h2" stroke="#3c3" /></svg>} label="Kranti binary to gray.vhd" />
        <Tab icon={<span className="pl-0.5"><WaveIcon /></span>} label="Wave" active />
        <span className="flex-1 border-t border-black" />
        <div className="w-[14px] overflow-hidden"><TabNav /></div>
      </div>
    </section>
  );
}

/* ---------- desktop taskbar ---------- */

const Logo = ({ size }: { size: string }) => (
  <svg viewBox="0 0 16 16" className={size} aria-hidden="true">
    <path d="M0 0h16v2.300H0z" fill="#1010f8" /><path d="M1 14.800V13.500h1v-7H1V5h4l3 4.200L11 5h4v1.500h-1v7h1v1.300h-4.500v-1.300h1V8.300L8 12.600 4.500 8.300v5.200h1v1.300z" fill="#000" />
  </svg>
);

function Taskbar() {
  const app = "relative flex size-[38px] items-center justify-center rounded";
  return (
    <footer className={`grid h-12 shrink-0 grid-cols-[1fr_auto_1fr] items-center border-t border-[#b8b0b0] bg-linear-to-r from-[#efdbd9] via-[#ead9d6] to-[#e2e3e4] to-75% pl-2 text-[#303030] ${segoe}`}>
      <span />
      <nav className="flex items-center">
        <button type="button" aria-label="Start" className="mr-[14px]">
          <svg viewBox="0 0 23 23" className="size-[23px]"><defs><linearGradient id="win" x1="0" y1="0" x2="1" y2="1"><stop stopColor="#3ec4f8" /><stop offset="1" stopColor="#0a78d8" /></linearGradient></defs><path d="M0 0h11v11H0zM12 0h11v11H12zM0 12h11v11H0zM12 12h11v11H12z" fill="url(#win)" /></svg>
        </button>
        <label className="mr-1.5 flex h-[31px] w-[218px] items-center rounded-full border border-[#e0cfcd] bg-[#faf4f3] pr-2 pl-2.5">
          <svg viewBox="0 0 16 16" className="mr-2.5 size-4" fill="none"><circle cx="7" cy="6.500" r="5.200" stroke="#222" strokeWidth="1.500" /><path d="M11 10.500l4 4.500" stroke="#222" strokeWidth="1.700" /></svg>
          <input aria-label="Search" placeholder="Search" className="w-0 flex-1 bg-transparent text-[12px] placeholder:text-[#606060]" />
          <svg viewBox="0 0 34 22" className="h-[22px] w-[34px]">
            <path d="M6 12h10l-1 9H7z" fill="#c8783a" /><path d="M5 10h12v3H5z" fill="#d88c48" /><path d="M8 10V6M11 10V4M14 10V6" stroke="#3a8a3a" /><circle cx="4" cy="5" r="3" fill="#f07a94" /><circle cx="10" cy="3" r="3" fill="#e85a80" /><circle cx="15" cy="5" r="2.500" fill="#f49ab0" /><circle cx="5" cy="9" r="2.500" fill="#e86a88" /><circle cx="15" cy="9" r="2.500" fill="#f07a94" /><circle cx="10" cy="7.500" r="2" fill="#f8a8b8" />
            <path d="M18 9h16v12H18z" fill="#3fae49" /><path d="M18 9h16v3H18z" fill="#62c85c" /><path d="M24.500 8h3v13h-3z" fill="#f6cf3a" /><path d="M26 9c-5 0-5-4-2-4 2 0 2 4 2 4s0-5 3-4c3 0 1 4-3 4z" fill="#f2bd2a" />
          </svg>
        </label>
        <button type="button" aria-label="Brave" className={app}>
          <svg viewBox="0 0 22 26" className="h-6 w-[21px]"><path d="M7 1h8l2 2h3l2 4-1 3 0 1-3 9-2 2-5 3.500L6 22l-2-2L1 11V10L0 7l2-4h3z" fill="#f8401c" /><path d="M11 6l3-1 4 3-2 4 1 2-3 2 1 2-4 3-4-3 1-2-3-2 1-2-2-4 4-3z" fill="#fff" /><path d="M6 9l3 1-1 3 3 2 3-2-1-3 3-1M11 15v2M9 19l2-1.500 2 1.500" stroke="#f8401c" strokeWidth="1.200" fill="none" /></svg>
        </button>
        <button type="button" aria-label="Chrome" className={app + " ml-1.5"}>
          <svg viewBox="0 0 24 24" className="size-6"><circle cx="12" cy="12" r="12" fill="#fbc116" /><path d="M1.600 6A12 12 0 0 1 22.400 6H12a6 6 0 0 0-5.200 9z" fill="#e33b2e" /><path d="M1.600 6A12 12 0 0 0 12 24l5.200-9A6 6 0 0 1 6.800 15z" fill="#2ba24c" /><circle cx="12" cy="12" r="5.800" fill="#fff" /><circle cx="12" cy="12" r="4.700" fill="#2a72e8" /></svg>
          <span className="absolute bottom-0 h-[3px] w-1.5 rounded-full bg-[#857c7c]" />
        </button>
        <button type="button" aria-label="Visual Studio Code" className={app + " ml-1.5"}>
          <svg viewBox="0 0 24 24" className="size-6"><path d="M17.500 0L24 3v18l-6.500 3L5 13.500 2 16l-2-1.500L3 12 0 9.500 2 8l3 2.500z" fill="#1484cc" /><path d="M17.500 0L24 3v18l-6.500 3z" fill="#2aa8f0" /><path d="M17.500 7v10L10.500 12z" fill="#ecdcda" /></svg>
        </button>
        <button type="button" aria-label="Visual Studio" className={app + " ml-1.5"}>
          <svg viewBox="0 0 24 24" className="size-6"><path d="M17 0l7 3v18l-7 3L3 13V11z" fill="#9a6ad8" /><path d="M17 0l7 3v18l-7 3z" fill="#c090f4" /><path d="M0 6l4-2 13 14v6L4 13v5l-4 1z" fill="#6a4298" /><path d="M17 7v10l-6-5zM3 9.500v5L5.500 12z" fill="#ecdcda" /></svg>
        </button>
        <button type="button" aria-label="ModelSim" className={app + " ml-1.5 bg-[#f8f4f3]"}>
          <Logo size="size-[23px]" />
          <span className="absolute bottom-0 h-[3px] w-4 rounded-full bg-[#1f8a99]" />
        </button>
      </nav>
      <div className="flex items-center justify-end pr-5 text-[11px]">
        <svg viewBox="0 0 12 8" className="mr-5 h-2 w-3" fill="none"><path d="M1 6.500l5-5 5 5" stroke="#222" strokeWidth="1.300" /></svg>
        <span className="mr-[18px]">ENG</span>
        <svg viewBox="0 0 18 14" className="mr-2 h-[14px] w-[17px]" fill="none" stroke="#222" strokeWidth="1.200"><path d="M1 5c5-5 11-5 16 0M3.500 8c4-4 7-4 11 0M6 10.500c2-2 4-2 6 0" /><circle cx="9" cy="12" r="1" fill="#222" /></svg>
        <svg viewBox="0 0 18 14" className="mr-[18px] h-[14px] w-[17px]" fill="none" stroke="#222"><path d="M1 5h3l4-4v12L4 9H1z" /><path d="M10 5c1 1 1 3 0 4M12 3c3 3 3 5 0 8M14 1.500c4 4 4 7 0 11" stroke="#aaa" /></svg>
        <time className="mr-2 text-right leading-4">9:42 AM<br />4/19/2024</time>
        <svg viewBox="0 0 16 18" className="mr-[18px] h-4 w-[14px]"><path d="M1 14l2-3V7c0-7 10-7 10 0v4l2 3z" fill="#174a5a" /><path d="M5.500 15.500h5c-1 2-4 2-5 0z" fill="#174a5a" /></svg>
        <svg viewBox="0 0 24 24" className="size-6" role="img" aria-label="Copilot preview">
          <path d="M5 3c1-3 8-3 10 0l2 3-5 10H4c-4-1-4-6-2-9z" fill="#2a8ae0" /><path d="M1 10c1-2 3 0 8-1l-2 8H3c-3-1-3-4-2-7z" fill="#58c468" /><path d="M15 6h5c4 1 4 5 2 10-1 2-3 2-6 2h-7z" fill="#c058d8" /><path d="M15 6h5c4 1 4 4 3 7h-8z" fill="#e86aa0" /><path d="M13 8l3-3-5 13H8z" fill="#f4f0f8" /><rect x="5" y="15" width="18" height="8" rx="2" fill="#f8c414" /><text x="14" y="21.500" textAnchor="middle" fontSize="7" fontWeight="700" fill="#222">PRE</text>
        </svg>
      </div>
    </footer>
  );
}

export default function App() {
  return (
    <div className={`flex h-screen flex-col overflow-hidden bg-[#262626] text-[11px] leading-4 text-black ${tahoma}`}>
      <CheckerDefs />
      <div className="flex min-h-0 flex-1 pt-[11px]">
        <div className="flex w-2 shrink-0 flex-col"><span className="h-[76px] bg-[#333]" /><span className="flex-1 border-r border-[#a0a0a0] bg-linear-to-r from-[#ececec] to-[#cfcfcf]" /></div>
        <main className="flex min-w-0 flex-1 flex-col overflow-hidden rounded-tl-lg bg-[#f0f0f0]">
          <header className={`flex h-[30px] shrink-0 items-center bg-linear-to-r from-[#f9efee] to-[#f3f3f3] pl-2 ${segoe}`}>
            <Logo size="size-4" />
            <h1 className="ml-[5px] text-[12px]">ModelSim SE-64 2020.4</h1>
            <div className="ml-auto flex items-center gap-[35px] pr-[11px]">
              {["M0 5.500h10", "M.5 .5h9v9h-9z", "M0 0l10 10M10 0L0 10"].map((d, i) => (
                <button key={d} type="button" aria-label={["Minimize", "Maximize", "Close"][i]}><svg viewBox="0 0 10 10" className="size-[10px] overflow-visible" fill="none"><path d={d} stroke="#000" /></svg></button>
              ))}
            </div>
          </header>
          <nav className={`flex h-5 shrink-0 items-center gap-3 bg-white pl-[7px] text-[12px] ${segoe}`}>
            {["File", "Edit", "View", "Compile", "Simulate", "Add", "Wave", "Tools", "Layout", "Bookmarks", "Window", "Help"].map((m) => <button key={m} type="button">{m}</button>)}
          </nav>
          <Toolbars />
          <div className="mt-px flex min-h-0 flex-1 pl-px">
            <SimPane />
            <div className="w-[7px] shrink-0 bg-[#ccc]" />
            <WavePane />
          </div>
          <div className="flex h-[6px] shrink-0 items-end gap-[5px] pr-2.5 pl-[3px]">
            <span className="h-[3px] w-[168px] border border-b-0 border-[#a0a0a0]" />
            <span className="h-[3px] w-[112px] border border-b-0 border-[#a0a0a0]" />
            <span className="h-[3px] w-[195px] border border-b-0 border-[#a0a0a0]" />
            <span className="h-[3px] flex-1 border border-b-0 border-[#a0a0a0]" />
          </div>
        </main>
      </div>
      <Taskbar />
    </div>
  );
}
